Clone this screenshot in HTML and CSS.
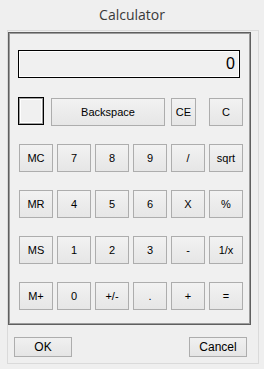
FILE: index.html
```html
<!DOCTYPE html>
<html lang="en">

<head>
    <meta charset="UTF-8">
    <meta name="viewport" content="width=device-width, initial-scale=1.0">
    <title>Calculator</title>
    <link rel="stylesheet" href="styles.css">
</head>

<body>
    <div class="title">Calculator</div>
    <div class="frame">
        <div class="panel">
            <div class="display">0</div>
            <div class="top-row">
                <div class="memory"></div>
                <button class="btn backspace">Backspace</button>
                <button class="btn ce">CE</button>
                <button class="btn c">C</button>
            </div>
            <div class="keys">
                <button class="btn">MC</button>
                <button class="btn">7</button>
                <button class="btn">8</button>
                <button class="btn">9</button>
                <button class="btn">/</button>
                <button class="btn">sqrt</button>

                <button class="btn">MR</button>
                <button class="btn">4</button>
                <button class="btn">5</button>
                <button class="btn">6</button>
                <button class="btn">X</button>
                <button class="btn">%</button>

                <button class="btn">MS</button>
                <button class="btn">1</button>
                <button class="btn">2</button>
                <button class="btn">3</button>
                <button class="btn">-</button>
                <button class="btn">1/x</button>

                <button class="btn">M+</button>
                <button class="btn">0</button>
                <button class="btn">+/-</button>
                <button class="btn">.</button>
                <button class="btn">+</button>
                <button class="btn">=</button>
            </div>
        </div>
        <div class="footer">
            <button class="btn dialog">OK</button>
            <button class="btn dialog">Cancel</button>
        </div>
    </div>
</body>

</html>
```

FILE: styles.css
```css
body,
html {
    padding: 0;
    margin: 0;
    background: #efefef;
    width: 264px;
    height: 369px;
    overflow: hidden;
}

.title {
    height: 30px;
    line-height: 29px;
    text-align: center;
    font-family: "Open Sans", "Noto Sans", sans-serif;
    font-size: 14px;
    color: #3a3a3a;
}

.frame {
    margin-left: 7px;
    width: 243px;
    height: 331px;
    border: 1px solid #dadada;
    padding: 1px 7px 0 0;
}

.panel {
    width: 232px;
    height: 274px;
    border: 1px solid #5f5f5f;
    box-shadow: inset 0 0 0 1px #9c9c9c;
    background: #f0f0f0;
    padding: 17px 0 0 9px;
}

.display {
    width: 222px;
    height: 28px;
    box-sizing: border-box;
    border: 1px solid #000;
    box-shadow: inset 1px 1px 0 #fff, inset -1px -1px 0 #fff;
    background: #f0f0f0;
    text-align: right;
    padding-right: 4px;
    line-height: 26px;
    font-family: "Liberation Sans", Arial, sans-serif;
    font-size: 16px;
    color: #000;
}

.top-row {
    display: flex;
    align-items: flex-start;
    margin-top: 20px;
}

.memory {
    width: 26px;
    height: 28px;
    margin-top: -1px;
    box-sizing: border-box;
    border: 1px solid #000;
    box-shadow: inset 1px 1px 0 #a0a0a0, inset -1px -1px 0 #a0a0a0, inset 2px 2px 0 #fff, inset -2px -2px 0 #fff;
    background: #f0f0f0;
}

.btn {
    margin: 0;
    padding: 0;
    height: 28px;
    box-sizing: border-box;
    border: 1px solid #adadad;
    border-radius: 0;
    background: linear-gradient(#f2f2f2, #e6e6e6);
    font-family: "Liberation Sans", Arial, sans-serif;
    font-size: 11px;
    color: #000;
    outline: none;
}

.backspace {
    width: 114px;
    margin-left: 7px;
}

.ce {
    width: 25px;
    margin-left: 6px;
}

.c {
    width: 34px;
    margin-left: 13px;
}

.keys {
    display: grid;
    grid-template-columns: repeat(6, 34px);
    column-gap: 4px;
    row-gap: 18px;
    margin: 18px 0 0 1px;
}

.footer {
    display: flex;
    justify-content: space-between;
    padding: 12px 4px 0 6px;
}

.btn.dialog {
    width: 58px;
    height: 20px;
    background: linear-gradient(#f0f0f0, #e5e5e5);
    font-size: 12px;
}
```
